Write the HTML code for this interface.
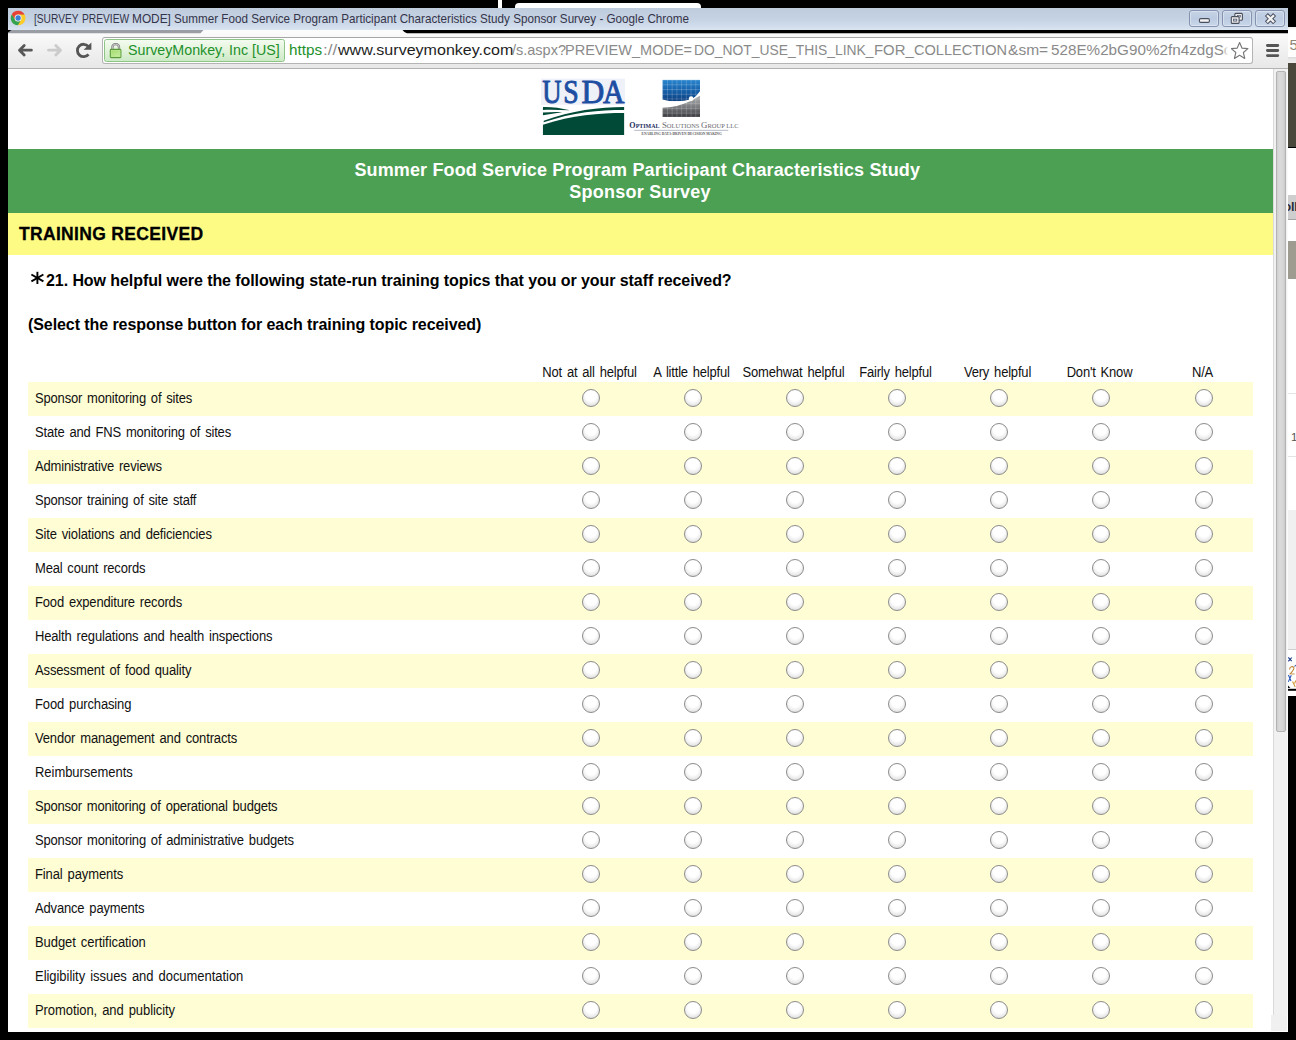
<!DOCTYPE html>
<html><head><meta charset="utf-8">
<style>
*{margin:0;padding:0;box-sizing:border-box}
html,body{width:1296px;height:1040px;overflow:hidden;background:#000;font-family:"Liberation Sans",sans-serif}
.a{position:absolute}
#abs{position:absolute;left:0;top:0;width:1296px;height:1040px;overflow:hidden}
.sg{position:absolute;white-space:nowrap;transform-origin:0 0}
#win{left:8px;top:8px;width:1280px;height:1024px;background:#fff}
#title{left:8px;top:8px;width:1280px;height:22px;background:linear-gradient(#bfccde 0%,#c4d1e2 45%,#cfdbea 78%,#dae5f1 100%)}
.wb{position:absolute;top:10px;width:30px;height:16.5px;border:1px solid #8593b0;border-radius:3px;background:linear-gradient(#c6d3e6,#bccbe1 50%,#c9d7ea);box-shadow:inset 0 0 0 1px rgba(255,255,255,.35)}
#tool{left:8px;top:30px;width:1280px;height:38.5px;background:linear-gradient(#fcfcfc,#f3f3f3 40%,#e8e8e8);border-bottom:1.3px solid #b2b2b2}
#omni{left:102px;top:37px;width:1151px;height:27px;background:#fff;border:1px solid #b4b4b4;border-top-color:#a6a6a6;border-radius:3px}
#ev{left:104px;top:39px;width:181px;height:23px;background:linear-gradient(#f4fbf0 0%,#e4f4dd 45%,#cdeac6 100%);border:1px solid #8cc586;border-radius:2.5px}
#sb{left:1273px;top:69px;width:15px;height:946px;background:#f1f1f1;border-left:1px solid #dadada;border-right:1px solid #fafafa}
#thumb{left:1276px;top:71px;width:10.2px;height:661px;background:linear-gradient(90deg,#cfcfcf,#dadada 30%,#d8d8d8 70%,#cacaca);border:1px solid #b3b3b3;border-radius:2px}
#green{left:8px;top:149px;width:1265px;height:64px;background:#4ca054;color:#fff;font-weight:bold;font-size:18px;text-align:center;line-height:22px;padding-top:10px;letter-spacing:0.15px;padding-right:4px}
#yel{left:8px;top:213px;width:1265px;height:42px;background:#fefb85}
#yel span{position:absolute;left:11px;top:11px;font-size:17.5px;font-weight:bold;color:#000;letter-spacing:0.32px;-webkit-text-stroke:0.3px #000}
.gt{color:#fff;font-weight:bold;font-size:18px;line-height:22px;white-space:nowrap}
.q{position:absolute;font-weight:bold;font-size:16px;color:#000;white-space:nowrap;letter-spacing:-0.075px}
.ch{position:absolute;top:364.9px;width:124px;text-align:center;font-size:13px;color:#111;white-space:nowrap;letter-spacing:-0.19px;word-spacing:1.5px;transform:scaleY(1.1);transform-origin:0 11.8px}
.row{position:absolute;left:28px;width:1225px;height:34px}
.row.odd{background:#fffdd4}
.rl{position:absolute;left:7px;top:9px;font-size:13px;color:#111;white-space:nowrap;letter-spacing:-0.19px;word-spacing:1.5px;transform:scaleY(1.1);transform-origin:0 11.8px}
.rb{position:absolute;width:18px;height:18px;border-radius:50%;border:1.7px solid #8c8c8c;background:radial-gradient(circle at 50% 36%,#fff 0%,#fff 40%,#ececec 66%,#cbcbcb 100%)}
</style></head><body>
<div id="abs">
<!-- background bits behind the window -->
<div class="a" style="left:497.5px;top:0;width:4.5px;height:8px;background:#fff"></div>
<div class="a" style="left:515px;top:3px;width:186px;height:8px;background:#fff;border-radius:4px 4px 0 0"></div>
<!-- right strip -->
<div class="a" style="left:1288px;top:27.3px;width:8px;height:30px;background:linear-gradient(#ececec,#fff 12%)"></div>
<div class="a" style="left:1289.6px;top:36.2px;font-size:15px;color:#8d8577">5</div>
<div class="a" style="left:1288px;top:57.3px;width:8px;height:5.4px;background:linear-gradient(#d8d8d8,#e6e6e6 30%,#ececec)"></div>
<div class="a" style="left:1288px;top:62.7px;width:8px;height:84.8px;background:#4a473c"></div>
<div class="a" style="left:1288px;top:147.5px;width:8px;height:548.5px;background:#fff"></div>
<div class="a" style="left:1288px;top:195px;width:8px;height:25.4px;background:#cecece;border-bottom:1px solid #a4a4a4"></div>
<div class="a" style="left:1283.6px;top:200px;font-size:12.5px;font-weight:bold;color:#2a2a3a;letter-spacing:-0.2px">oll</div>
<div class="a" style="left:1288px;top:241.2px;width:8px;height:37.5px;background:#9e9b90"></div>
<div class="a" style="left:1288px;top:393px;width:8px;height:1px;background:#e4e4e4"></div>
<div class="a" style="left:1288px;top:455.6px;width:8px;height:1px;background:#e4e4e4"></div>
<div class="a" style="left:1291px;top:431px;font-size:11.5px;color:#555">1</div>
<div class="a" style="left:1288px;top:510px;width:8px;height:140px;background:#f0f0f0;border-bottom:1px solid #d0d0d0"></div>
<svg class="a" style="left:1288px;top:651px" width="8" height="46" viewBox="0 0 8 46"><rect width="8" height="46" fill="#fff"/><path d="M0.3 6.5l3.4 3.6M3.8 6.5l-3.5 3.8" stroke="#1d3a86" stroke-width="1.1" fill="none"/><path d="M1.5 18.5c0.3-3 3-3.6 4.2-2.2 1 1.4-0.6 3.4-3.6 6.5l4.5 0.2" stroke="#c08a3c" stroke-width="1.2" fill="none"/><path d="M6.5 15.5c1-1.4 1.5-1.3 1.5-1.3" stroke="#2a4a9a" stroke-width="1.1" fill="none"/><path d="M0.4 24l2.6 6M3.3 24.3l-3 6.5" stroke="#2a55b8" stroke-width="1.1" fill="none"/><path d="M4.6 30.5l2.6 5.5M7.8 29.5l-1.2 3" stroke="#d29a3c" stroke-width="1.1" fill="none"/><path d="M0 34.5l2.4 2.6-2.4 0z" fill="#111"/><rect y="37.8" width="8" height="2" fill="#000"/><rect y="45" width="8" height="1" fill="#000"/></svg>
<div class="a" style="left:1288px;top:696px;width:8px;height:344px;background:#000"></div>

<!-- window -->
<div id="win" class="a"></div>
<div id="title" class="a"></div>
<svg class="a" style="left:10px;top:10px" width="17" height="17" viewBox="0 0 17 17">
 <circle cx="8.1" cy="8" r="7.1" fill="#e0b030"/>
 <path d="M8.10 4.55L14.53 4.55A7.3 7.3 0 0 1 7.87 15.30L11.09 9.72A3.45 3.45 0 0 0 8.10 4.55Z" fill="#fbcd2a"/>
 <path d="M11.09 9.72L7.87 15.30A7.3 7.3 0 0 1 1.90 4.15L5.11 9.72A3.45 3.45 0 0 0 11.09 9.72Z" fill="#34a34f"/>
 <path d="M5.11 9.72L1.90 4.15A7.3 7.3 0 0 1 14.53 4.55L8.10 4.55A3.45 3.45 0 0 0 5.11 9.72Z" fill="#e5433a"/>
 <circle cx="8.1" cy="8" r="3.5" fill="#f4f6f8"/>
 <circle cx="8.1" cy="8" r="2.65" fill="#3b7fd9"/>
</svg>
<!-- window buttons -->
<div class="wb" style="left:1189.3px"></div><div class="wb" style="left:1222.3px"></div><div class="wb" style="left:1255.4px"></div>
<svg class="a" style="left:1189px;top:9.8px" width="99" height="22" viewBox="0 0 99 22">
 <rect x="10.4" y="8.6" width="10" height="3.8" rx="1.3" fill="#f4f4f4" stroke="#4a4f5e" stroke-width="1.1"/>
 <rect x="45.8" y="3.4" width="7.6" height="6.8" rx="1" fill="#eee" stroke="#4a4f5e" stroke-width="1.1"/>
 <rect x="48.6" y="5.5" width="3" height="1.6" fill="#c6d3e6" stroke="#4a4f5e" stroke-width="0.6"/>
 <rect x="42.3" y="6.6" width="7.8" height="6.8" rx="1" fill="#eee" stroke="#4a4f5e" stroke-width="1.1"/>
 <rect x="44.6" y="9.1" width="3.2" height="2" fill="#c6d3e6" stroke="#4a4f5e" stroke-width="0.7"/>
 <g stroke-linecap="butt"><path d="M77.4 4.6l8.2 8.2M85.6 4.6l-8.2 8.2" stroke="#4a4f5e" stroke-width="4.3"/><path d="M78 5.2l7 7M85 5.2l-7 7" stroke="#f2f2f2" stroke-width="2.3"/></g>
</svg>
<div id="tool" class="a"></div>
<!-- strips under title -->
<svg class="a" style="left:8px;top:29.7px" width="1280" height="4" viewBox="0 0 1280 4">
 <path d="M0 0 L195.5 0 L192.5 3.3 L0 3.3Z" fill="#9a9da4"/>
 <path d="M0 0 L3.5 0 L0 2.6Z" fill="#000"/>
 <path d="M394.5 0 L1280 0 L1280 3.2 L399 3.2 Q396.5 3 394.5 0Z" fill="#000"/>
</svg>
<!-- nav icons -->
<svg class="a" style="left:12px;top:36px" width="90" height="30" viewBox="0 0 90 30">
 <g fill="none" stroke-linecap="round" stroke-linejoin="round" stroke-width="2.8">
  <path d="M19.4 14.2H7.6M12.2 9.6L7.5 14.2l4.7 4.8" stroke="#575757"/>
  <path d="M36.5 14.2h11.8M43.8 9.6l4.7 4.6-4.7 4.8" stroke="#cbcbcb"/>
 </g>
 <path d="M76.5 18.3A6.2 6.2 0 1 1 76.3 10.4" fill="none" stroke="#555" stroke-width="2.8"/>
 <path d="M79.4 6.4V13.8H71.6Z" fill="#555"/>
</svg>
<div id="omni" class="a"></div>
<div id="ev" class="a"></div>
<svg class="a" style="left:109px;top:42px" width="14" height="17" viewBox="0 0 14 17">
 <defs><linearGradient id="lk" x1="0" y1="0" x2="0.6" y2="1"><stop offset="0" stop-color="#9ed868"/><stop offset="1" stop-color="#c6ee9e"/></linearGradient></defs>
 <path d="M3.4 7.6V5.2a3 3 0 0 1 3-3h0.6a3 3 0 0 1 3 3V7.6" fill="none" stroke="#7c7c7c" stroke-width="2.3"/>
 <path d="M3.4 7.6V5.2a3 3 0 0 1 3-3h0.6a3 3 0 0 1 3 3V7.6" fill="none" stroke="#ececec" stroke-width="0.7"/>
 <rect x="1.3" y="7.4" width="10.6" height="8.2" rx="0.9" fill="url(#lk)" stroke="#5b9b3a" stroke-width="1.1"/>
 <rect x="2.3" y="8.4" width="8.6" height="6.2" fill="none" stroke="#b9e790" stroke-width="0.7"/>
</svg>
<svg class="a" style="left:1229px;top:40px" width="22" height="22" viewBox="0 0 22 22">
 <path d="M10.6 2.6l2.35 5.5 5.95 0.5-4.5 3.95 1.35 5.85-5.15-3.1-5.15 3.1 1.35-5.85-4.5-3.95 5.95-0.5z" fill="#fff" stroke="#777" stroke-width="1.15" stroke-linejoin="round"/>
</svg>
<svg class="a" style="left:1264px;top:42px" width="18" height="18" viewBox="0 0 18 18"><g stroke="#555" stroke-width="2.8" stroke-linecap="round"><path d="M3.4 3.5h10.4M3.4 8.5h10.4M3.4 13.6h10.4"/></g></svg>
<span class="sg" style="left:33.8px;top:12.0px;font-size:12.4px;color:#34344a;transform:scaleX(0.8212);">[SURVEY</span>
<span class="sg" style="left:82.2px;top:12.0px;font-size:12.4px;color:#34344a;transform:scaleX(0.8258);">PREVIEW</span>
<span class="sg" style="left:131.9px;top:12.0px;font-size:12.4px;color:#34344a;transform:scaleX(0.9575);">MODE]</span>
<span class="sg" style="left:174px;top:12.0px;font-size:12.4px;color:#34344a;transform:scaleX(0.9417);">Summer Food Service Program Participant Characteristics Study Sponsor Survey - Google Chrome</span>
<span class="sg" style="left:128.4px;top:41.2px;font-size:15px;color:#22902a;transform:scaleX(0.9500);">SurveyMonkey, Inc [US]</span>
<span class="sg" style="left:289.3px;top:41.45px;font-size:15px;color:#22902a;transform:scaleX(1.0144);">https</span>
<span class="sg" style="left:323.3px;top:41.45px;font-size:15px;color:#8a8a8a;transform:scaleX(1.1266);">://</span>
<span class="sg" style="left:337.6px;top:41.45px;font-size:15px;color:#1e1e1e;transform:scaleX(1.0699);">www.surveymonkey.com</span>
<span class="sg" style="left:512.3px;top:41.45px;font-size:15px;color:#8a8a8a;transform:scaleX(0.9664);">/s.aspx?</span>
<span class="sg" style="left:565.2px;top:41.45px;font-size:15px;color:#8a8a8a;transform:scaleX(0.9682);">PREVIEW_MODE=</span>
<span class="sg" style="left:694px;top:41.45px;font-size:15px;color:#8a8a8a;transform:scaleX(0.9241);">DO_NOT_USE_THIS_LINK_</span>
<span class="sg" style="left:874px;top:41.45px;font-size:15px;color:#8a8a8a;transform:scaleX(0.9921);">FOR_</span>
<span class="sg" style="left:914.3px;top:41.45px;font-size:15px;color:#8a8a8a;transform:scaleX(0.9702);">COLLECTION</span>
<span class="sg" style="left:1007.8px;top:41.45px;font-size:15px;color:#8a8a8a;transform:scaleX(1.0370);">&amp;sm=</span>
<span class="sg" style="left:1051px;top:41.45px;font-size:15px;color:#8a8a8a;transform:scaleX(1.0161);">528E%2bG90%2fn4zdgSc</span>
<div class="a" style="left:1221.5px;top:40px;width:9px;height:22px;background:linear-gradient(90deg,rgba(255,255,255,0),#fff 70%)"></div>
<!-- scrollbar -->
<div id="sb" class="a"></div>
<div id="thumb" class="a"></div>
<div class="a" style="left:1271px;top:1015px;width:16px;height:16px;background:#f0f0f0"></div>

<!-- page -->
<div id="green" class="a"></div>
<div class="a gt" style="left:354.4px;top:159px;letter-spacing:0.14px">Summer Food Service Program Participant Characteristics Study</div>
<div class="a gt" style="left:569.3px;top:181px;letter-spacing:0.24px">Sponsor Survey</div>
<div id="yel" class="a"><span>TRAINING RECEIVED</span></div>
<svg class="a" style="left:536px;top:72px" width="100" height="70" viewBox="0 0 1296 907">
 <rect x="66" y="86" width="1086" height="745" fill="#eef1f8"/>
 <rect x="66" y="425" width="1086" height="406" fill="#fff"/>
 <g font-family="Liberation Serif" font-size="446" fill="#1d4ea2" stroke="#1d4ea2" stroke-width="13" stroke-linejoin="round"><text x="82" y="400" textLength="250" lengthAdjust="spacingAndGlyphs">U</text><text x="352" y="400" textLength="200" lengthAdjust="spacingAndGlyphs">S</text><text x="590" y="400" textLength="295" lengthAdjust="spacingAndGlyphs">D</text><text x="868" y="400" textLength="278" lengthAdjust="spacingAndGlyphs">A</text></g>
 <g fill="#004a37">
  <path d="M90 455 C200 452 320 468 440 497 C320 492 200 488 90 492Z"/>
  <path d="M90 525 C180 518 260 516 340 520 C250 532 170 545 90 560Z"/>
  <path d="M1142 453 L1142 492 C820 492 480 520 100 652 L100 632 C460 498 820 455 1142 453Z"/>
  <path d="M1142 530 L1142 815 L90 815 L90 682 C470 555 820 530 1142 530Z"/>
 </g>
</svg>
<svg class="a" style="left:624px;top:72px" width="120" height="70" viewBox="0 0 1296 756">
 <defs>
  <linearGradient id="gb" x1="0" y1="0" x2="0" y2="1"><stop offset="0" stop-color="#2a86cf"/><stop offset="0.5" stop-color="#155fa8"/><stop offset="1" stop-color="#0b3a78"/></linearGradient>
  <linearGradient id="gg" x1="0" y1="0" x2="0" y2="1"><stop offset="0" stop-color="#b4b6b8"/><stop offset="0.55" stop-color="#77797c"/><stop offset="1" stop-color="#3c3d40"/></linearGradient>
  <pattern id="grid" x="413" y="82" width="51" height="51" patternUnits="userSpaceOnUse"><path d="M0 0H51M0 0V51" stroke="#fff" stroke-opacity="0.55" stroke-width="7" fill="none"/></pattern>
  <clipPath id="cb"><path d="M413 82H822V205C790 250 760 280 722 292C640 322 520 325 413 296Z"/></clipPath>
  <clipPath id="cg"><path d="M413 386C520 380 620 360 722 312C760 292 795 272 822 255V485H413Z"/></clipPath>
 </defs>
 <g clip-path="url(#cb)"><rect x="413" y="82" width="409" height="250" fill="url(#gb)"/><rect x="413" y="82" width="409" height="250" fill="url(#grid)"/></g>
 <g clip-path="url(#cg)"><rect x="413" y="250" width="409" height="235" fill="url(#gg)"/><rect x="413" y="235" width="409" height="250" fill="url(#grid)"/></g>
 <circle cx="725" cy="288" r="25" fill="#fff"/>
 <g font-family="Liberation Serif" >
  <text x="58" y="605" font-size="92" font-weight="bold" fill="#1d2e5e" textLength="325" lengthAdjust="spacingAndGlyphs">O<tspan font-size="68">PTIMAL</tspan></text>
  <text x="410" y="605" font-size="92" fill="#6a6a6e" textLength="828" lengthAdjust="spacingAndGlyphs">S<tspan font-size="68">OLUTIONS </tspan>G<tspan font-size="68">ROUP LLC</tspan></text>
  <text x="190" y="676" font-size="34" fill="#5a5a60" font-weight="bold" textLength="866" lengthAdjust="spacingAndGlyphs">ENABLING DATA-DRIVEN DECISION MAKING</text>
 </g>
 <rect x="110" y="625" width="1016" height="8" fill="#9aa2b4"/>
</svg>

 <svg style="position:absolute;left:30px;top:271.3px" width="15" height="14" viewBox="0 0 15 14"><g stroke="#000" stroke-width="1.9" stroke-linecap="butt"><line x1="7.4" y1="0.8" x2="7.4" y2="13"/><line x1="1.4" y1="3.5" x2="13.4" y2="10.3"/><line x1="1.4" y1="10.3" x2="13.4" y2="3.5"/></g></svg>
 <div class="q" style="left:46px;top:272px">21. How helpful were the following state-run training topics that you or your staff received?</div>
 <div class="q" style="left:28px;top:315.5px">(Select the response button for each training topic received)</div>
<div class="ch" style="left:527.5px">Not at all helpful</div>
<div class="ch" style="left:629.5px">A little helpful</div>
<div class="ch" style="left:731.5px">Somehwat helpful</div>
<div class="ch" style="left:833.5px">Fairly helpful</div>
<div class="ch" style="left:935.5px">Very helpful</div>
<div class="ch" style="left:1037.5px">Don't Know</div>
<div class="ch" style="left:1140.5px">N/A</div>
<div class="row odd" style="top:382px"><span class="rl" style="letter-spacing:-0.183px">Sponsor monitoring of sites</span></div>
<i class="rb" style="left:582px;top:389px"></i>
<i class="rb" style="left:684px;top:389px"></i>
<i class="rb" style="left:786px;top:389px"></i>
<i class="rb" style="left:888px;top:389px"></i>
<i class="rb" style="left:990px;top:389px"></i>
<i class="rb" style="left:1092px;top:389px"></i>
<i class="rb" style="left:1195px;top:389px"></i>
<div class="row" style="top:416px"><span class="rl" style="letter-spacing:-0.178px">State and FNS monitoring of sites</span></div>
<i class="rb" style="left:582px;top:423px"></i>
<i class="rb" style="left:684px;top:423px"></i>
<i class="rb" style="left:786px;top:423px"></i>
<i class="rb" style="left:888px;top:423px"></i>
<i class="rb" style="left:990px;top:423px"></i>
<i class="rb" style="left:1092px;top:423px"></i>
<i class="rb" style="left:1195px;top:423px"></i>
<div class="row odd" style="top:450px"><span class="rl" style="letter-spacing:-0.185px">Administrative reviews</span></div>
<i class="rb" style="left:582px;top:457px"></i>
<i class="rb" style="left:684px;top:457px"></i>
<i class="rb" style="left:786px;top:457px"></i>
<i class="rb" style="left:888px;top:457px"></i>
<i class="rb" style="left:990px;top:457px"></i>
<i class="rb" style="left:1092px;top:457px"></i>
<i class="rb" style="left:1195px;top:457px"></i>
<div class="row" style="top:484px"><span class="rl" style="letter-spacing:-0.187px">Sponsor training of site staff</span></div>
<i class="rb" style="left:582px;top:491px"></i>
<i class="rb" style="left:684px;top:491px"></i>
<i class="rb" style="left:786px;top:491px"></i>
<i class="rb" style="left:888px;top:491px"></i>
<i class="rb" style="left:990px;top:491px"></i>
<i class="rb" style="left:1092px;top:491px"></i>
<i class="rb" style="left:1195px;top:491px"></i>
<div class="row odd" style="top:518px"><span class="rl" style="letter-spacing:-0.149px">Site violations and deficiencies</span></div>
<i class="rb" style="left:582px;top:525px"></i>
<i class="rb" style="left:684px;top:525px"></i>
<i class="rb" style="left:786px;top:525px"></i>
<i class="rb" style="left:888px;top:525px"></i>
<i class="rb" style="left:990px;top:525px"></i>
<i class="rb" style="left:1092px;top:525px"></i>
<i class="rb" style="left:1195px;top:525px"></i>
<div class="row" style="top:552px"><span class="rl" style="letter-spacing:-0.184px">Meal count records</span></div>
<i class="rb" style="left:582px;top:559px"></i>
<i class="rb" style="left:684px;top:559px"></i>
<i class="rb" style="left:786px;top:559px"></i>
<i class="rb" style="left:888px;top:559px"></i>
<i class="rb" style="left:990px;top:559px"></i>
<i class="rb" style="left:1092px;top:559px"></i>
<i class="rb" style="left:1195px;top:559px"></i>
<div class="row odd" style="top:586px"><span class="rl" style="letter-spacing:-0.173px">Food expenditure records</span></div>
<i class="rb" style="left:582px;top:593px"></i>
<i class="rb" style="left:684px;top:593px"></i>
<i class="rb" style="left:786px;top:593px"></i>
<i class="rb" style="left:888px;top:593px"></i>
<i class="rb" style="left:990px;top:593px"></i>
<i class="rb" style="left:1092px;top:593px"></i>
<i class="rb" style="left:1195px;top:593px"></i>
<div class="row" style="top:620px"><span class="rl" style="letter-spacing:-0.158px">Health regulations and health inspections</span></div>
<i class="rb" style="left:582px;top:627px"></i>
<i class="rb" style="left:684px;top:627px"></i>
<i class="rb" style="left:786px;top:627px"></i>
<i class="rb" style="left:888px;top:627px"></i>
<i class="rb" style="left:990px;top:627px"></i>
<i class="rb" style="left:1092px;top:627px"></i>
<i class="rb" style="left:1195px;top:627px"></i>
<div class="row odd" style="top:654px"><span class="rl" style="letter-spacing:-0.136px">Assessment of food quality</span></div>
<i class="rb" style="left:582px;top:661px"></i>
<i class="rb" style="left:684px;top:661px"></i>
<i class="rb" style="left:786px;top:661px"></i>
<i class="rb" style="left:888px;top:661px"></i>
<i class="rb" style="left:990px;top:661px"></i>
<i class="rb" style="left:1092px;top:661px"></i>
<i class="rb" style="left:1195px;top:661px"></i>
<div class="row" style="top:688px"><span class="rl" style="letter-spacing:-0.137px">Food purchasing</span></div>
<i class="rb" style="left:582px;top:695px"></i>
<i class="rb" style="left:684px;top:695px"></i>
<i class="rb" style="left:786px;top:695px"></i>
<i class="rb" style="left:888px;top:695px"></i>
<i class="rb" style="left:990px;top:695px"></i>
<i class="rb" style="left:1092px;top:695px"></i>
<i class="rb" style="left:1195px;top:695px"></i>
<div class="row odd" style="top:722px"><span class="rl" style="letter-spacing:-0.155px">Vendor management and contracts</span></div>
<i class="rb" style="left:582px;top:729px"></i>
<i class="rb" style="left:684px;top:729px"></i>
<i class="rb" style="left:786px;top:729px"></i>
<i class="rb" style="left:888px;top:729px"></i>
<i class="rb" style="left:990px;top:729px"></i>
<i class="rb" style="left:1092px;top:729px"></i>
<i class="rb" style="left:1195px;top:729px"></i>
<div class="row" style="top:756px"><span class="rl" style="letter-spacing:-0.040px">Reimbursements</span></div>
<i class="rb" style="left:582px;top:763px"></i>
<i class="rb" style="left:684px;top:763px"></i>
<i class="rb" style="left:786px;top:763px"></i>
<i class="rb" style="left:888px;top:763px"></i>
<i class="rb" style="left:990px;top:763px"></i>
<i class="rb" style="left:1092px;top:763px"></i>
<i class="rb" style="left:1195px;top:763px"></i>
<div class="row odd" style="top:790px"><span class="rl" style="letter-spacing:-0.210px">Sponsor monitoring of operational budgets</span></div>
<i class="rb" style="left:582px;top:797px"></i>
<i class="rb" style="left:684px;top:797px"></i>
<i class="rb" style="left:786px;top:797px"></i>
<i class="rb" style="left:888px;top:797px"></i>
<i class="rb" style="left:990px;top:797px"></i>
<i class="rb" style="left:1092px;top:797px"></i>
<i class="rb" style="left:1195px;top:797px"></i>
<div class="row" style="top:824px"><span class="rl" style="letter-spacing:-0.183px">Sponsor monitoring of administrative budgets</span></div>
<i class="rb" style="left:582px;top:831px"></i>
<i class="rb" style="left:684px;top:831px"></i>
<i class="rb" style="left:786px;top:831px"></i>
<i class="rb" style="left:888px;top:831px"></i>
<i class="rb" style="left:990px;top:831px"></i>
<i class="rb" style="left:1092px;top:831px"></i>
<i class="rb" style="left:1195px;top:831px"></i>
<div class="row odd" style="top:858px"><span class="rl" style="letter-spacing:-0.111px">Final payments</span></div>
<i class="rb" style="left:582px;top:865px"></i>
<i class="rb" style="left:684px;top:865px"></i>
<i class="rb" style="left:786px;top:865px"></i>
<i class="rb" style="left:888px;top:865px"></i>
<i class="rb" style="left:990px;top:865px"></i>
<i class="rb" style="left:1092px;top:865px"></i>
<i class="rb" style="left:1195px;top:865px"></i>
<div class="row" style="top:892px"><span class="rl" style="letter-spacing:-0.171px">Advance payments</span></div>
<i class="rb" style="left:582px;top:899px"></i>
<i class="rb" style="left:684px;top:899px"></i>
<i class="rb" style="left:786px;top:899px"></i>
<i class="rb" style="left:888px;top:899px"></i>
<i class="rb" style="left:990px;top:899px"></i>
<i class="rb" style="left:1092px;top:899px"></i>
<i class="rb" style="left:1195px;top:899px"></i>
<div class="row odd" style="top:926px"><span class="rl" style="letter-spacing:-0.065px">Budget certification</span></div>
<i class="rb" style="left:582px;top:933px"></i>
<i class="rb" style="left:684px;top:933px"></i>
<i class="rb" style="left:786px;top:933px"></i>
<i class="rb" style="left:888px;top:933px"></i>
<i class="rb" style="left:990px;top:933px"></i>
<i class="rb" style="left:1092px;top:933px"></i>
<i class="rb" style="left:1195px;top:933px"></i>
<div class="row" style="top:960px"><span class="rl" style="letter-spacing:-0.040px">Eligibility issues and documentation</span></div>
<i class="rb" style="left:582px;top:967px"></i>
<i class="rb" style="left:684px;top:967px"></i>
<i class="rb" style="left:786px;top:967px"></i>
<i class="rb" style="left:888px;top:967px"></i>
<i class="rb" style="left:990px;top:967px"></i>
<i class="rb" style="left:1092px;top:967px"></i>
<i class="rb" style="left:1195px;top:967px"></i>
<div class="row odd" style="top:994px"><span class="rl" style="letter-spacing:-0.073px">Promotion, and publicity</span></div>
<i class="rb" style="left:582px;top:1001px"></i>
<i class="rb" style="left:684px;top:1001px"></i>
<i class="rb" style="left:786px;top:1001px"></i>
<i class="rb" style="left:888px;top:1001px"></i>
<i class="rb" style="left:990px;top:1001px"></i>
<i class="rb" style="left:1092px;top:1001px"></i>
<i class="rb" style="left:1195px;top:1001px"></i>
<!-- bottom black -->
<div class="a" style="left:0;top:1032px;width:1296px;height:8px;background:#000"></div>
<div class="a" style="left:0;top:0;width:8px;height:1040px;background:#000"></div>
</div>
</body></html>
